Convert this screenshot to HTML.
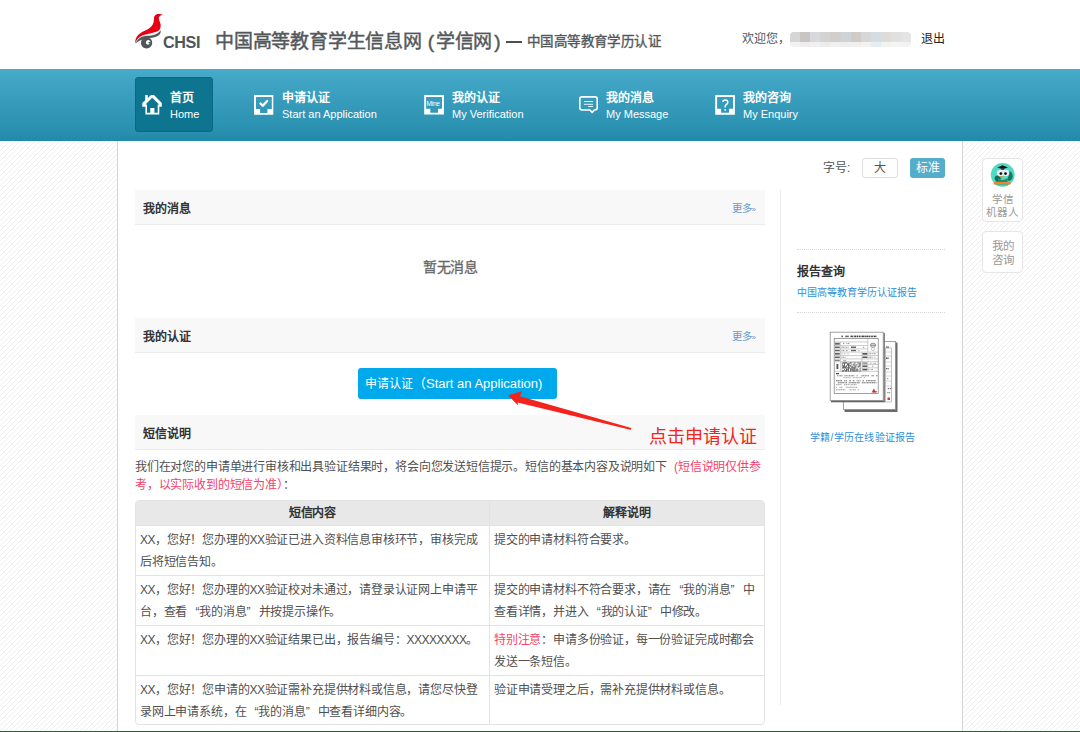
<!DOCTYPE html>
<html lang="zh-CN"><head><meta charset="utf-8">
<style>
*{margin:0;padding:0;box-sizing:border-box}
html,body{width:1080px;height:732px;overflow:hidden;background:#fff;font-family:"Liberation Sans",sans-serif;font-size:12px;color:#333}
.a{position:absolute;white-space:nowrap}
.nav{position:absolute;left:0;top:69px;width:1080px;height:72px;background:linear-gradient(#46aac9,#2a90b0 85%,#2389a8)}
.ni .cn{position:absolute;font-size:12px;font-weight:bold;color:#fff;line-height:12px;margin-top:1px}
.ni .en{position:absolute;font-size:11px;color:#fff;line-height:12px}
.bar{position:absolute;left:135px;width:630px;height:35px;background:#f8f8f8;border-bottom:1px solid #ececec}
.bar b{position:absolute;left:8px;top:11.5px;font-size:12px;line-height:14px;color:#333}
.more{position:absolute;right:9px;top:10.5px;font-size:10.5px;line-height:14px;color:#6a9bd6}
.more i{font-style:normal;font-size:8px}
table{position:absolute;left:135px;top:500px;width:630px;border-collapse:separate;border-spacing:0;border:1px solid #e3e3e3;border-radius:4px;overflow:hidden}
td,th{font-size:12px;letter-spacing:-0.18px;color:#505050;line-height:21.5px;vertical-align:top;padding:4px 4px 1px 4px;border-top:1px solid #e3e3e3;text-align:left;white-space:nowrap}
th{background:#e8e8e8;border-top:none;text-align:center;font-weight:bold;color:#333;height:24px;line-height:20px;padding:2px 4px}
td+td,th+th{border-left:1px solid #e3e3e3}
.red{color:#f4426a}
i.ql,i.qr{font-style:normal;display:inline-block;width:12px}
i.ql{text-align:right}
.x{letter-spacing:-0.5px}
</style></head><body>
<!-- striped background -->
<svg class="a" style="left:0;top:141px" width="1080" height="591">
<defs><pattern id="st" width="5" height="5" patternUnits="userSpaceOnUse"><path d="M-1,6 L6,-1" stroke="#efefef" stroke-width="1"/></pattern></defs>
<rect width="1080" height="591" fill="#fff"/><rect width="1080" height="591" fill="url(#st)"/>
</svg>
<div class="a" style="left:117px;top:141px;width:846px;height:591px;background:#fff;border-left:1px solid #d5d5d5;border-right:1px solid #d5d5d5"></div>
<div class="a" style="left:0;top:731px;width:1080px;height:1px;background:#2d5e34"></div>

<!-- header -->
<svg class="a" style="left:125px;top:5px" width="85" height="50" viewBox="125 5 85 50">
<path d="M162.8,14.6 C160.5,13.8 158,13.9 156.2,14.4 C154.6,15.3 154,16.8 154,18.2 C153.9,20 153.8,21.5 153.5,22.6 C152.8,25 151.6,26.5 150.2,27.5 C148,29.2 145.8,30.3 143.7,31.3 C141.5,32.4 139.6,33.6 138.2,35.1 C136.6,36.7 135.8,38.3 135.5,40 C135.2,41.2 135.1,42.4 135.2,43.3 C135.8,41.8 136.4,40.5 137.1,39.5 C139,37.3 141.2,35.9 143.7,35.1 C146.5,34.2 149.3,33.7 151.9,33 C154.5,32.4 156.7,31.8 158.4,30.8 C159.5,30 160.1,29 160.3,28 C160.8,26.7 160.8,25.4 160.6,24.2 C160.3,22.6 159.5,21.2 159,19.8 C158.7,18.5 158.9,17.3 159.5,16.6 C160.4,15.6 161.6,15 162.8,14.6 Z" fill="#e60012"/>
<path d="M135.4,43.6 C136.8,40.8 138.6,38.6 140.9,37.3 C143.6,35.9 146.4,35.8 149.1,35.7 C151.7,35.5 154.1,35.2 156.2,34 C158.3,33 159.8,31.7 160.6,30.2 C160.9,31.8 160.6,33.3 159.5,34.6 C158.1,36.1 156.4,36.9 154.6,37.3 C151.8,37.9 149,38 146.4,38.4 C143.8,38.8 141.6,39.5 139.8,40.6 C138.1,41.6 136.6,42.6 135.4,43.6 Z" fill="#50575a"/>
<path d="M146.6,37.3 C149.8,37.3 152.2,39.6 152.2,42.8 C152.2,46 149.8,48.4 146.6,48.4 C143.4,48.4 141,46 141,42.8 C141,40.6 142,38.9 143.5,38 C144.5,37.5 145.5,37.3 146.6,37.3 Z M148.4,39.9 C146.9,39.9 145.9,41 145.9,42.4 C145.9,43.7 146.9,44.6 148.1,44.6 C149,44.6 149.6,44.1 149.9,43.4 C149.4,43.7 148.9,43.6 148.6,43.2 C148.3,42.7 148.5,42.1 149,41.9 C149.5,41.7 150.2,42 150.5,42.5 C150.4,41 149.6,39.9 148.4,39.9 Z" fill="#50575a" fill-rule="evenodd"/>
<text x="163" y="48.3" font-family="Liberation Sans" font-weight="bold" font-size="16.2" letter-spacing="-0.4" fill="#50575a">CHSI</text>
</svg>
<div class="a" style="left:215px;top:30px;font-size:19px;line-height:24px;font-weight:normal;-webkit-text-stroke:0.45px #53585b;color:#53585b;letter-spacing:-0.2px">中国高等教育学生信息网<span style="display:inline-block;width:14px;font-family:'Liberation Sans';font-weight:normal;text-align:right;padding-right:2px">(</span>学信网<span style="display:inline-block;width:14px;font-family:'Liberation Sans';font-weight:normal;padding-left:2px">)</span></div>
<div class="a" style="left:506px;top:41px;width:16px;height:2px;background:#4a4f52"></div>
<div class="a" style="left:527px;top:33px;font-size:13.5px;letter-spacing:0.4px;line-height:18px;font-weight:normal;-webkit-text-stroke:0.35px #53585b;color:#53585b">中国高等教育学历认证</div>
<div class="a" style="left:742px;top:31px;font-size:12px;line-height:16px;color:#555">欢迎您，</div>
<div class="a" style="left:790px;top:32px;width:121px;height:15px;border-radius:4px;overflow:hidden;filter:blur(0.5px)"><div style="position:absolute;left:0.00px;top:0;width:10.2px;height:10px;background:#d6d5d7"></div><div style="position:absolute;left:0.00px;top:10px;width:10.2px;height:5px;background:#f2f2f2"></div><div style="position:absolute;left:10.12px;top:0;width:10.2px;height:10px;background:#c8c5c2"></div><div style="position:absolute;left:10.12px;top:10px;width:10.2px;height:5px;background:#eeeeee"></div><div style="position:absolute;left:20.24px;top:0;width:10.2px;height:10px;background:#d8d9dd"></div><div style="position:absolute;left:20.24px;top:10px;width:10.2px;height:5px;background:#f0f0f0"></div><div style="position:absolute;left:30.36px;top:0;width:10.2px;height:10px;background:#d3d3d3"></div><div style="position:absolute;left:30.36px;top:10px;width:10.2px;height:5px;background:#ececec"></div><div style="position:absolute;left:40.48px;top:0;width:10.2px;height:10px;background:#d2cecb"></div><div style="position:absolute;left:40.48px;top:10px;width:10.2px;height:5px;background:#f0f0f0"></div><div style="position:absolute;left:50.60px;top:0;width:10.2px;height:10px;background:#cfd3d6"></div><div style="position:absolute;left:50.60px;top:10px;width:10.2px;height:5px;background:#eeeeee"></div><div style="position:absolute;left:60.72px;top:0;width:10.2px;height:10px;background:#cecbc9"></div><div style="position:absolute;left:60.72px;top:10px;width:10.2px;height:5px;background:#efefef"></div><div style="position:absolute;left:70.84px;top:0;width:10.2px;height:10px;background:#d7d7d7"></div><div style="position:absolute;left:70.84px;top:10px;width:10.2px;height:5px;background:#f4f2ee"></div><div style="position:absolute;left:80.96px;top:0;width:10.2px;height:10px;background:#d4dde3"></div><div style="position:absolute;left:80.96px;top:10px;width:10.2px;height:5px;background:#e6edf2"></div><div style="position:absolute;left:91.08px;top:0;width:10.2px;height:10px;background:#dfdcd7"></div><div style="position:absolute;left:91.08px;top:10px;width:10.2px;height:5px;background:#f2f2ee"></div><div style="position:absolute;left:101.20px;top:0;width:10.2px;height:10px;background:#e0e0e0"></div><div style="position:absolute;left:101.20px;top:10px;width:10.2px;height:5px;background:#f4f4f4"></div><div style="position:absolute;left:111.32px;top:0;width:10.2px;height:10px;background:#e4e4e4"></div><div style="position:absolute;left:111.32px;top:10px;width:10.2px;height:5px;background:#f2f2f2"></div></div>
<div class="a" style="left:921px;top:31px;font-size:12px;line-height:16px;color:#222">退出</div>

<!-- nav -->
<div class="nav"></div>
<div class="a" style="left:135px;top:77px;width:78px;height:55px;background:#0e7591;border:1px solid #0b6883;border-radius:3px"></div>
<div class="ni">
 <svg class="a" style="left:138px;top:90px" width="30" height="30" viewBox="138 90 30 30"><path d="M145.2,95.1 H147.8 V98 L151.1,95.1 H154 L161.8,102.9 V106.8 H159.3 V114.6 H145.4 V106.8 H142.3 V103.1 L145.2,100.2 Z M145.5,104.6 L147,104.6 V112.8 H150.3 V108 H154.4 V112.8 H157.7 V104.4 H159.1 L152.2,97.8 Z" fill="#fff" fill-rule="evenodd"/></svg>
 <div class="cn" style="left:170px;top:91px">首页</div><div class="en" style="left:170px;top:108px">Home</div>
 <svg class="a" style="left:250px;top:90px" width="28" height="28" viewBox="250 90 28 28"><path d="M254,95 H273.3 V114.7 H254 Z M255.9,97.1 V108.9 H260.1 V113 H267.4 V108.9 H271.8 V97.1 Z" fill="#fff" fill-rule="evenodd"/><path d="M260.5,103.5 L262.8,105.8 L267.2,101" fill="none" stroke="#fff" stroke-width="2.3" stroke-linecap="round" stroke-linejoin="round"/></svg>
 <div class="cn" style="left:282px;top:91px">申请认证</div><div class="en" style="left:282px;top:108px">Start an Application</div>
 <svg class="a" style="left:420px;top:90px" width="28" height="28" viewBox="420 90 28 28"><path d="M424.2,95 H443.9 V114.6 H424.2 Z M426.1,97.1 V108.7 H430.3 V112.8 H438 V108.7 H442 V97.1 Z" fill="#fff" fill-rule="evenodd"/><text x="426.6" y="106" font-family="Liberation Sans" font-size="6.6" letter-spacing="-0.3" fill="#fff">Mine</text></svg>
 <div class="cn" style="left:452px;top:91px">我的认证</div><div class="en" style="left:452px;top:108px">My Verification</div>
 <svg class="a" style="left:575px;top:90px" width="28" height="28" viewBox="575 90 28 28"><path d="M582,96.9 H595 Q597.2,96.9 597.2,99.1 V107.8 Q597.2,110 595,110 H594.3 L592.2,112.4 L589.9,110 H582 Q579.8,110 579.8,107.8 V99.1 Q579.8,96.9 582,96.9 Z" fill="none" stroke="#fff" stroke-width="1.6" stroke-linejoin="round"/><path d="M584,101.5 H593 M584,104.3 H593 M588.2,106.5 H593" stroke="#fff" stroke-width="0.9"/></svg>
 <div class="cn" style="left:606px;top:91px">我的消息</div><div class="en" style="left:606px;top:108px">My Message</div>
 <svg class="a" style="left:711px;top:90px" width="28" height="28" viewBox="711 90 28 28"><path d="M715.2,95 H734.9 V114.7 H715.2 Z M717.1,97.1 V108.7 H721.1 V112.8 H729 V108.7 H733 V97.1 Z" fill="#fff" fill-rule="evenodd"/><path d="M722.9,102 Q722.9,100 725.3,100 Q727.8,100 727.8,102.2 Q727.8,103.6 726.3,104.5 Q725.2,105.2 725.2,106.8 V107.5" fill="none" stroke="#fff" stroke-width="1.5"/><rect x="724.4" y="109.2" width="1.6" height="1.5" fill="#fff"/></svg>
 <div class="cn" style="left:743px;top:91px">我的咨询</div><div class="en" style="left:743px;top:108px">My Enquiry</div>
</div>

<!-- font size -->
<div class="a" style="left:823px;top:161px;font-size:12px;line-height:14px;color:#555">字号:</div>
<div class="a" style="left:862px;top:158px;width:36px;height:20px;border:1px solid #dcdcdc;border-radius:3px;font-size:12px;line-height:18px;text-align:center;color:#555">大</div>
<div class="a" style="left:910px;top:158px;width:35px;height:20px;background:#56adca;border-radius:3px;font-size:12px;line-height:20px;text-align:center;color:#fff">标准</div>

<!-- float -->
<div class="a" style="left:982px;top:158px;width:41px;height:64px;border:1px solid #e6e6e6;border-radius:4px;background:#fff"></div>
<svg class="a" style="left:988px;top:160px" width="30" height="30" viewBox="988 160 30 30">
<circle cx="1002.7" cy="174.8" r="11.9" fill="#50dac4"/>
<path d="M994.5,178.5 Q995,175 998,175.5 L1001,178 L999,182 L996,181.5 Z" fill="#0f6e58"/>
<path d="M1007,180 Q1009,176 1009.5,171 Q1012.5,172 1012.8,176.5 Q1012.5,180 1009,181 Z" fill="#127a60"/>
<path d="M998,178 Q1002.5,182 1007.5,178 L1007.5,182 L998,182 Z" fill="#1f8f74"/>
<ellipse cx="1000.5" cy="173" rx="3.6" ry="3.2" fill="#e8eef4"/>
<ellipse cx="1005.6" cy="173" rx="3.6" ry="3.2" fill="#e8eef4"/>
<circle cx="1000.9" cy="173.6" r="1.4" fill="#111"/><circle cx="1005.5" cy="173.6" r="1.4" fill="#111"/>
<path d="M997.3,167.6 L1002.6,165.3 L1007.9,167.6 L1002.6,169.3 Z" fill="#151515"/>
<rect x="1001.3" y="168.6" width="2.6" height="1.4" fill="#0f6e58"/>
<path d="M1000,176 L1002.6,176 L1002,179.5 Z" fill="#f28a2c"/>
<rect x="993.5" y="182" width="17" height="2.4" rx="0.6" fill="#f0842c"/>
<path d="M991.8,183.2 L993.6,182 L993.6,184.4 Z" fill="#f4e6d8"/>
<rect x="996" y="184.4" width="12" height="0.8" fill="#2fb384"/>
</svg>
<div class="a" style="left:982px;top:193px;width:41px;text-align:center;font-size:10.6px;line-height:13.2px;color:#999">学信<br>机器人</div>
<div class="a" style="left:982px;top:231px;width:41px;height:42px;border:1px solid #e6e6e6;border-radius:4px;background:#fff;text-align:center;font-size:11.5px;line-height:13.5px;color:#999;padding-top:8px">我的<br>咨询</div>

<!-- left column -->
<div class="bar" style="top:190px"><b>我的消息</b><span class="more">更多<i>»</i></span></div>
<div class="a" style="left:423px;top:257px;font-size:14px;letter-spacing:-0.3px;-webkit-text-stroke:0.3px #666;line-height:20px;color:#666">暂无消息</div>
<div class="bar" style="top:318px"><b>我的认证</b><span class="more">更多<i>»</i></span></div>
<div class="a" style="left:358px;top:368px;width:199px;height:31px;background:#00a9ec;border-radius:3px"></div>
<div class="a" style="left:365px;top:376px;font-size:12px;line-height:16px;color:#fff">申请认证<span style="font-size:13px">（Start an Application)</span></div>
<div class="bar" style="top:415px"><b>短信说明</b></div>
<svg class="a" style="left:500px;top:385px" width="140" height="50" viewBox="500 385 140 50">
<path d="M508,395.3 L522,391.2 L520,396.2 L631.2,427.9 Q632,429.4 630.4,429.8 L517.6,402.6 L518.2,405.6 Z" fill="#f4241c"/>
</svg>
<div class="a" style="left:649px;top:425px;font-size:18px;line-height:24px;color:#f4241c">点击申请认证</div>
<div class="a" style="left:135px;top:459px;font-size:12px;letter-spacing:-0.18px;line-height:17.5px;color:#505050">我们在对您的申请单进行审核和出具验证结果时，将会向您发送短信提示。短信的基本内容及说明如下<span class="red"><i class="ql" style="width:11px">(</i>短信说明仅供参<br>考，以实际收到的短信为准）</span>：</div>

<table>
<tr><th style="width:353px">短信内容</th><th>解释说明</th></tr>
<tr style="height:50px"><td><span class="x">XX</span>，您好！您办理的<span class="x">XX</span>验证已进入资料信息审核环节，审核完成<br>后将短信告知。</td><td>提交的申请材料符合要求。</td></tr>
<tr style="height:50px"><td><span class="x">XX</span>，您好！您办理的<span class="x">XX</span>验证校对未通过，请登录认证网上申请平<br>台，查看<i class="ql">“</i>我的消息<i class="qr">”</i>并按提示操作。</td><td>提交的申请材料不符合要求，请在<i class="ql">“</i>我的消息<i class="qr">”</i>中<br>查看详情，并进入<i class="ql">“</i>我的认证<i class="qr">”</i>中修改。</td></tr>
<tr style="height:50px"><td><span class="x">XX</span>，您好！您办理的<span class="x">XX</span>验证结果已出，报告编号：<span class="x">XXXXXXXX</span>。</td><td><span class="red">特别注意</span>：申请多份验证，每一份验证完成时都会<br>发送一条短信。</td></tr>
<tr style="height:47px"><td><span class="x">XX</span>，您好！您申请的<span class="x">XX</span>验证需补充提供材料或信息，请您尽快登<br>录网上申请系统，在<i class="ql">“</i>我的消息<i class="qr">”</i>中查看详细内容。</td><td>验证申请受理之后，需补充提供材料或信息。</td></tr>
</table>

<!-- right column -->
<div class="a" style="left:779.5px;top:190px;width:1.5px;height:515px;background:#ececec"></div>
<div class="a" style="left:797px;top:249px;width:148px;border-top:1px dotted #d6d6d6"></div>
<div class="a" style="left:797px;top:264.5px;font-size:12px;line-height:14px;font-weight:bold;color:#333">报告查询</div>
<div class="a" style="left:797px;top:286px;font-size:10px;line-height:14px;color:#2e8fd6">中国高等教育学历认证报告</div>
<div class="a" style="left:797px;top:312px;width:148px;border-top:1px dotted #d6d6d6"></div>
<svg class="a" style="left:826px;top:328px" width="76" height="88" viewBox="826 328 76 88">
<rect x="844.5" y="342.5" width="53.0" height="69.5" fill="#6a6a6a"/>
<rect x="843.5" y="341.5" width="52.0" height="68.0" fill="#fff"/>
<rect x="843.5" y="341.5" width="52" height="68" fill="none" stroke="#8a8a8a" stroke-width="0.8"/>
<rect x="885.5" y="348" width="6" height="54" fill="none" stroke="#999" stroke-width="0.6"/>
<rect x="886.0" y="346.5" width="3.0" height="1.2" fill="#666"/>
<path d="M885.5,352.0 L891.5,352.0" stroke="#aaa" stroke-width="0.5"/>
<path d="M885.5,356.0 L891.5,356.0" stroke="#aaa" stroke-width="0.5"/>
<path d="M885.5,362.0 L891.5,362.0" stroke="#aaa" stroke-width="0.5"/>
<path d="M885.5,366.0 L891.5,366.0" stroke="#aaa" stroke-width="0.5"/>
<path d="M885.5,372.0 L891.5,372.0" stroke="#aaa" stroke-width="0.5"/>
<path d="M885.5,376.0 L891.5,376.0" stroke="#aaa" stroke-width="0.5"/>
<path d="M885.5,381.0 L891.5,381.0" stroke="#aaa" stroke-width="0.5"/>
<path d="M885.5,386.0 L891.5,386.0" stroke="#aaa" stroke-width="0.5"/>
<rect x="886.0" y="357.5" width="1.0" height="1.5" fill="#555"/>
<rect x="887.3" y="357.5" width="1.3" height="1.5" fill="#555"/>
<rect x="886.0" y="368.0" width="1.5" height="1.2" fill="#666"/>
<rect x="887.9" y="368.0" width="0.9" height="1.2" fill="#666"/>
<rect x="887.3" y="378.0" width="1.0" height="1.2" fill="#777"/>
<rect x="887.7" y="388.0" width="1.4" height="1.2" fill="#777"/>
<rect x="889.7" y="388.0" width="1.5" height="1.2" fill="#777"/>
<rect x="887.3" y="392.0" width="1.3" height="1.2" fill="#888"/>
<rect x="889.1" y="392.0" width="1.1" height="1.2" fill="#888"/>
<rect x="887.5" y="397.5" width="2.5" height="2.5" fill="#d9363e"/>
<rect x="831.0" y="333.0" width="53.8" height="69.3" fill="#666"/>
<rect x="830.0" y="332.0" width="53.5" height="68.5" fill="#fff"/>
<rect x="830.2" y="332.2" width="53" height="68.3" fill="none" stroke="#8a8a8a" stroke-width="0.8"/>
<rect x="841.5" y="335.6" width="1.3" height="1.6" fill="#333"/>
<rect x="845.4" y="335.6" width="1.4" height="1.6" fill="#333"/>
<rect x="847.3" y="335.6" width="1.3" height="1.6" fill="#333"/>
<rect x="850.5" y="335.6" width="1.4" height="1.6" fill="#333"/>
<rect x="852.2" y="335.6" width="1.0" height="1.6" fill="#333"/>
<rect x="853.8" y="335.6" width="0.8" height="1.6" fill="#333"/>
<rect x="854.8" y="335.6" width="1.4" height="1.6" fill="#333"/>
<rect x="856.7" y="335.6" width="1.6" height="1.6" fill="#333"/>
<rect x="858.9" y="335.6" width="1.0" height="1.6" fill="#333"/>
<rect x="860.4" y="335.6" width="0.8" height="1.6" fill="#333"/>
<rect x="861.6" y="335.6" width="1.3" height="1.6" fill="#333"/>
<rect x="863.1" y="335.6" width="1.5" height="1.6" fill="#333"/>
<rect x="865.2" y="335.6" width="1.5" height="1.6" fill="#333"/>
<rect x="867.1" y="335.6" width="1.2" height="1.6" fill="#333"/>
<rect x="868.7" y="335.6" width="1.2" height="1.6" fill="#333"/>
<rect x="870.6" y="335.6" width="1.2" height="1.6" fill="#333"/>
<rect x="872.2" y="335.6" width="1.0" height="1.6" fill="#333"/>
<rect x="873.8" y="335.6" width="1.2" height="1.6" fill="#333"/>
<rect x="875.3" y="335.6" width="1.1" height="1.6" fill="#333"/>
<rect x="834.2" y="338.5" width="44" height="55" fill="none" stroke="#777" stroke-width="0.7"/>
<path d="M834.2,341.9 L867.8,341.9" stroke="#999" stroke-width="0.5"/>
<path d="M834.2,345.6 L867.8,345.6" stroke="#999" stroke-width="0.5"/>
<path d="M834.2,348.9 L867.8,348.9" stroke="#999" stroke-width="0.5"/>
<path d="M834.2,352.1 L878.2,352.1" stroke="#999" stroke-width="0.5"/>
<path d="M834.2,355.6 L878.2,355.6" stroke="#999" stroke-width="0.5"/>
<path d="M834.2,358.9 L878.2,358.9" stroke="#999" stroke-width="0.5"/>
<path d="M834.2,361.7 L878.2,361.7" stroke="#999" stroke-width="0.5"/>
<path d="M834.2,371.3 L878.2,371.3" stroke="#999" stroke-width="0.5"/>
<path d="M867.8,338.5 L867.8,352.1" stroke="#999" stroke-width="0.5"/>
<path d="M862.0,352.1 L862.0,371.3" stroke="#999" stroke-width="0.5"/>
<path d="M840.5,341.9 L840.5,361.7" stroke="#aaa" stroke-width="0.5"/>
<rect x="835.0" y="342.8" width="4.8" height="1.9" fill="#666"/>
<rect x="843.0" y="343.0" width="1.3" height="1.1" fill="#999"/>
<rect x="846.4" y="343.0" width="0.8" height="1.1" fill="#999"/>
<rect x="847.7" y="343.0" width="1.6" height="1.1" fill="#999"/>
<rect x="835.0" y="346.5" width="4.8" height="1.5" fill="#666"/>
<rect x="841.5" y="346.7" width="1.3" height="1.1" fill="#999"/>
<rect x="843.1" y="346.7" width="1.1" height="1.1" fill="#999"/>
<rect x="844.6" y="346.7" width="1.0" height="1.1" fill="#999"/>
<rect x="846.2" y="346.7" width="0.8" height="1.1" fill="#999"/>
<rect x="847.5" y="346.7" width="1.0" height="1.1" fill="#999"/>
<rect x="835.0" y="349.8" width="4.8" height="1.4" fill="#666"/>
<rect x="841.5" y="350.0" width="1.0" height="1.1" fill="#999"/>
<rect x="842.9" y="350.0" width="1.4" height="1.1" fill="#999"/>
<rect x="846.0" y="350.0" width="1.5" height="1.1" fill="#999"/>
<rect x="835.0" y="353.0" width="4.8" height="1.7" fill="#666"/>
<rect x="841.5" y="353.2" width="1.0" height="1.1" fill="#999"/>
<rect x="844.4" y="353.2" width="0.9" height="1.1" fill="#999"/>
<rect x="847.5" y="353.2" width="0.9" height="1.1" fill="#999"/>
<rect x="835.0" y="356.5" width="4.8" height="1.5" fill="#666"/>
<rect x="841.5" y="356.7" width="1.0" height="1.1" fill="#999"/>
<rect x="842.9" y="356.7" width="1.1" height="1.1" fill="#999"/>
<rect x="844.6" y="356.7" width="0.9" height="1.1" fill="#999"/>
<rect x="835.0" y="359.8" width="4.8" height="1.0" fill="#666"/>
<rect x="843.4" y="360.0" width="1.2" height="1.1" fill="#999"/>
<rect x="844.9" y="360.0" width="1.0" height="1.1" fill="#999"/>
<rect x="851.0" y="346.5" width="5.0" height="1.5" fill="#666"/>
<rect x="863.1" y="346.7" width="1.1" height="1.1" fill="#999"/>
<rect x="851.0" y="349.8" width="5.0" height="1.4" fill="#666"/>
<rect x="858.5" y="350.0" width="1.0" height="1.1" fill="#999"/>
<rect x="862.5" y="353.0" width="5.0" height="1.7" fill="#555"/>
<rect x="868.5" y="353.2" width="1.0" height="1.1" fill="#999"/>
<rect x="869.9" y="353.2" width="1.1" height="1.1" fill="#999"/>
<rect x="871.6" y="353.2" width="0.8" height="1.1" fill="#999"/>
<rect x="872.6" y="353.2" width="0.9" height="1.1" fill="#999"/>
<rect x="874.1" y="353.2" width="1.5" height="1.1" fill="#999"/>
<rect x="862.5" y="356.5" width="5.0" height="1.5" fill="#555"/>
<rect x="868.5" y="356.7" width="1.1" height="1.1" fill="#999"/>
<rect x="869.9" y="356.7" width="1.3" height="1.1" fill="#999"/>
<rect x="871.6" y="356.7" width="1.0" height="1.1" fill="#999"/>
<rect x="874.4" y="356.7" width="0.9" height="1.1" fill="#999"/>
<rect x="862.5" y="362.6" width="5.0" height="1.0" fill="#555"/>
<rect x="870.3" y="362.8" width="1.1" height="1.1" fill="#999"/>
<rect x="873.4" y="362.8" width="1.0" height="1.1" fill="#999"/>
<rect x="874.9" y="362.8" width="0.9" height="1.1" fill="#999"/>
<rect x="862.5" y="365.4" width="5.0" height="1.5" fill="#555"/>
<rect x="872.2" y="365.6" width="1.2" height="1.1" fill="#999"/>
<rect x="862.5" y="368.7" width="5.0" height="1.7" fill="#555"/>
<rect x="868.5" y="368.9" width="0.9" height="1.1" fill="#999"/>
<rect x="870.7" y="368.9" width="0.9" height="1.1" fill="#999"/>
<rect x="872.1" y="368.9" width="0.9" height="1.1" fill="#999"/>
<path d="M862.0,364.5 L878.2,364.5" stroke="#999" stroke-width="0.5"/>
<path d="M862.0,367.8 L878.2,367.8" stroke="#999" stroke-width="0.5"/>
<path d="M868.0,352.1 L868.0,371.3" stroke="#bbb" stroke-width="0.4"/>
<ellipse cx="873" cy="345.2" rx="2.6" ry="2" fill="none" stroke="#777" stroke-width="0.8"/>
<rect x="870.5" y="344.6" width="5.0" height="1.2" fill="#888"/>
<ellipse cx="873" cy="349" rx="1.6" ry="1.6" fill="none" stroke="#999" stroke-width="0.5"/>
<rect x="836.5" y="364.0" width="1.8" height="5.0" fill="#555"/>
<path d="M840.5,361.7 L840.5,371.3" stroke="#aaa" stroke-width="0.5"/>
<rect x="842.0" y="363.4" width="1.0" height="1.0" fill="#3a3a3a"/>
<rect x="842.0" y="365.4" width="1.0" height="1.0" fill="#3a3a3a"/>
<rect x="842.0" y="367.4" width="1.0" height="1.0" fill="#3a3a3a"/>
<rect x="842.0" y="370.4" width="1.0" height="1.0" fill="#3a3a3a"/>
<rect x="843.0" y="362.4" width="1.0" height="1.0" fill="#3a3a3a"/>
<rect x="843.0" y="365.4" width="1.0" height="1.0" fill="#3a3a3a"/>
<rect x="843.0" y="366.4" width="1.0" height="1.0" fill="#3a3a3a"/>
<rect x="843.0" y="367.4" width="1.0" height="1.0" fill="#3a3a3a"/>
<rect x="843.0" y="370.4" width="1.0" height="1.0" fill="#3a3a3a"/>
<rect x="844.0" y="362.4" width="1.0" height="1.0" fill="#3a3a3a"/>
<rect x="844.0" y="363.4" width="1.0" height="1.0" fill="#3a3a3a"/>
<rect x="844.0" y="364.4" width="1.0" height="1.0" fill="#3a3a3a"/>
<rect x="844.0" y="365.4" width="1.0" height="1.0" fill="#3a3a3a"/>
<rect x="844.0" y="366.4" width="1.0" height="1.0" fill="#3a3a3a"/>
<rect x="844.0" y="367.4" width="1.0" height="1.0" fill="#3a3a3a"/>
<rect x="844.0" y="369.4" width="1.0" height="1.0" fill="#3a3a3a"/>
<rect x="845.0" y="362.4" width="1.0" height="1.0" fill="#3a3a3a"/>
<rect x="845.0" y="366.4" width="1.0" height="1.0" fill="#3a3a3a"/>
<rect x="845.0" y="367.4" width="1.0" height="1.0" fill="#3a3a3a"/>
<rect x="845.0" y="370.4" width="1.0" height="1.0" fill="#3a3a3a"/>
<rect x="846.0" y="362.4" width="1.0" height="1.0" fill="#3a3a3a"/>
<rect x="846.0" y="365.4" width="1.0" height="1.0" fill="#3a3a3a"/>
<rect x="846.0" y="366.4" width="1.0" height="1.0" fill="#3a3a3a"/>
<rect x="846.0" y="368.4" width="1.0" height="1.0" fill="#3a3a3a"/>
<rect x="846.0" y="369.4" width="1.0" height="1.0" fill="#3a3a3a"/>
<rect x="846.0" y="370.4" width="1.0" height="1.0" fill="#3a3a3a"/>
<rect x="847.0" y="363.4" width="1.0" height="1.0" fill="#3a3a3a"/>
<rect x="847.0" y="364.4" width="1.0" height="1.0" fill="#3a3a3a"/>
<rect x="847.0" y="367.4" width="1.0" height="1.0" fill="#3a3a3a"/>
<rect x="847.0" y="369.4" width="1.0" height="1.0" fill="#3a3a3a"/>
<rect x="848.0" y="363.4" width="1.0" height="1.0" fill="#3a3a3a"/>
<rect x="848.0" y="364.4" width="1.0" height="1.0" fill="#3a3a3a"/>
<rect x="848.0" y="365.4" width="1.0" height="1.0" fill="#3a3a3a"/>
<rect x="848.0" y="366.4" width="1.0" height="1.0" fill="#3a3a3a"/>
<rect x="848.0" y="367.4" width="1.0" height="1.0" fill="#3a3a3a"/>
<rect x="848.0" y="368.4" width="1.0" height="1.0" fill="#3a3a3a"/>
<rect x="848.0" y="369.4" width="1.0" height="1.0" fill="#3a3a3a"/>
<rect x="848.0" y="370.4" width="1.0" height="1.0" fill="#3a3a3a"/>
<rect x="849.0" y="363.4" width="1.0" height="1.0" fill="#3a3a3a"/>
<rect x="849.0" y="365.4" width="1.0" height="1.0" fill="#3a3a3a"/>
<rect x="849.0" y="367.4" width="1.0" height="1.0" fill="#3a3a3a"/>
<rect x="850.0" y="362.4" width="1.0" height="1.0" fill="#3a3a3a"/>
<rect x="850.0" y="365.4" width="1.0" height="1.0" fill="#3a3a3a"/>
<rect x="850.0" y="368.4" width="1.0" height="1.0" fill="#3a3a3a"/>
<rect x="850.0" y="369.4" width="1.0" height="1.0" fill="#3a3a3a"/>
<rect x="850.0" y="370.4" width="1.0" height="1.0" fill="#3a3a3a"/>
<rect x="842" y="362.4" width="9" height="9" fill="none" stroke="#666" stroke-width="0.3"/>
<rect x="851.5" y="366.4" width="1.0" height="1.0" fill="#3a3a3a"/>
<rect x="851.5" y="367.4" width="1.0" height="1.0" fill="#3a3a3a"/>
<rect x="851.5" y="368.4" width="1.0" height="1.0" fill="#3a3a3a"/>
<rect x="851.5" y="369.4" width="1.0" height="1.0" fill="#3a3a3a"/>
<rect x="852.5" y="364.4" width="1.0" height="1.0" fill="#3a3a3a"/>
<rect x="852.5" y="366.4" width="1.0" height="1.0" fill="#3a3a3a"/>
<rect x="852.5" y="367.4" width="1.0" height="1.0" fill="#3a3a3a"/>
<rect x="852.5" y="369.4" width="1.0" height="1.0" fill="#3a3a3a"/>
<rect x="852.5" y="370.4" width="1.0" height="1.0" fill="#3a3a3a"/>
<rect x="853.5" y="363.4" width="1.0" height="1.0" fill="#3a3a3a"/>
<rect x="853.5" y="364.4" width="1.0" height="1.0" fill="#3a3a3a"/>
<rect x="853.5" y="367.4" width="1.0" height="1.0" fill="#3a3a3a"/>
<rect x="853.5" y="368.4" width="1.0" height="1.0" fill="#3a3a3a"/>
<rect x="853.5" y="369.4" width="1.0" height="1.0" fill="#3a3a3a"/>
<rect x="853.5" y="370.4" width="1.0" height="1.0" fill="#3a3a3a"/>
<rect x="854.5" y="362.4" width="1.0" height="1.0" fill="#3a3a3a"/>
<rect x="854.5" y="365.4" width="1.0" height="1.0" fill="#3a3a3a"/>
<rect x="854.5" y="366.4" width="1.0" height="1.0" fill="#3a3a3a"/>
<rect x="854.5" y="367.4" width="1.0" height="1.0" fill="#3a3a3a"/>
<rect x="854.5" y="368.4" width="1.0" height="1.0" fill="#3a3a3a"/>
<rect x="854.5" y="370.4" width="1.0" height="1.0" fill="#3a3a3a"/>
<rect x="855.5" y="364.4" width="1.0" height="1.0" fill="#3a3a3a"/>
<rect x="855.5" y="366.4" width="1.0" height="1.0" fill="#3a3a3a"/>
<rect x="855.5" y="369.4" width="1.0" height="1.0" fill="#3a3a3a"/>
<rect x="856.5" y="364.4" width="1.0" height="1.0" fill="#3a3a3a"/>
<rect x="856.5" y="368.4" width="1.0" height="1.0" fill="#3a3a3a"/>
<rect x="856.5" y="369.4" width="1.0" height="1.0" fill="#3a3a3a"/>
<rect x="856.5" y="370.4" width="1.0" height="1.0" fill="#3a3a3a"/>
<rect x="857.5" y="362.4" width="1.0" height="1.0" fill="#3a3a3a"/>
<rect x="857.5" y="366.4" width="1.0" height="1.0" fill="#3a3a3a"/>
<rect x="857.5" y="369.4" width="1.0" height="1.0" fill="#3a3a3a"/>
<rect x="858.5" y="363.4" width="1.0" height="1.0" fill="#3a3a3a"/>
<rect x="858.5" y="365.4" width="1.0" height="1.0" fill="#3a3a3a"/>
<rect x="858.5" y="366.4" width="1.0" height="1.0" fill="#3a3a3a"/>
<rect x="859.5" y="362.4" width="1.0" height="1.0" fill="#3a3a3a"/>
<rect x="859.5" y="363.4" width="1.0" height="1.0" fill="#3a3a3a"/>
<rect x="859.5" y="364.4" width="1.0" height="1.0" fill="#3a3a3a"/>
<rect x="859.5" y="365.4" width="1.0" height="1.0" fill="#3a3a3a"/>
<rect x="859.5" y="368.4" width="1.0" height="1.0" fill="#3a3a3a"/>
<rect x="859.5" y="370.4" width="1.0" height="1.0" fill="#3a3a3a"/>
<rect x="851.5" y="362.4" width="9" height="9" fill="none" stroke="#666" stroke-width="0.3"/>
<rect x="836.0" y="373.0" width="3.0" height="1.2" fill="#444"/>
<rect x="837.0" y="375.2" width="1.0" height="1.1" fill="#888"/>
<rect x="838.6" y="375.2" width="0.8" height="1.1" fill="#888"/>
<rect x="839.7" y="375.2" width="1.4" height="1.1" fill="#888"/>
<rect x="841.4" y="375.2" width="1.1" height="1.1" fill="#888"/>
<rect x="844.4" y="375.2" width="1.0" height="1.1" fill="#888"/>
<rect x="845.7" y="375.2" width="1.4" height="1.1" fill="#888"/>
<rect x="847.4" y="375.2" width="1.0" height="1.1" fill="#888"/>
<rect x="848.8" y="375.2" width="1.5" height="1.1" fill="#888"/>
<rect x="850.7" y="375.2" width="0.9" height="1.1" fill="#888"/>
<rect x="851.9" y="375.2" width="1.2" height="1.1" fill="#888"/>
<rect x="853.4" y="375.2" width="1.0" height="1.1" fill="#888"/>
<rect x="856.6" y="375.2" width="1.1" height="1.1" fill="#888"/>
<rect x="861.4" y="375.2" width="1.3" height="1.1" fill="#888"/>
<rect x="862.9" y="375.2" width="1.4" height="1.1" fill="#888"/>
<rect x="864.7" y="375.2" width="1.2" height="1.1" fill="#888"/>
<rect x="866.2" y="375.2" width="1.2" height="1.1" fill="#888"/>
<rect x="867.8" y="375.2" width="1.3" height="1.1" fill="#888"/>
<rect x="871.4" y="375.2" width="1.4" height="1.1" fill="#888"/>
<rect x="873.0" y="375.2" width="1.1" height="1.1" fill="#888"/>
<rect x="875.9" y="375.2" width="1.5" height="1.1" fill="#888"/>
<rect x="843.3" y="377.2" width="0.9" height="1.0" fill="#aaa"/>
<rect x="844.4" y="377.2" width="1.0" height="1.0" fill="#aaa"/>
<rect x="845.8" y="377.2" width="1.4" height="1.0" fill="#aaa"/>
<rect x="847.5" y="377.2" width="1.3" height="1.0" fill="#aaa"/>
<rect x="849.2" y="377.2" width="1.4" height="1.0" fill="#aaa"/>
<rect x="852.8" y="377.2" width="1.1" height="1.0" fill="#aaa"/>
<rect x="854.3" y="377.2" width="1.0" height="1.0" fill="#aaa"/>
<rect x="855.6" y="377.2" width="1.4" height="1.0" fill="#aaa"/>
<rect x="857.4" y="377.2" width="1.0" height="1.0" fill="#aaa"/>
<rect x="858.6" y="377.2" width="1.1" height="1.0" fill="#aaa"/>
<rect x="859.9" y="377.2" width="0.9" height="1.0" fill="#aaa"/>
<rect x="861.2" y="377.2" width="0.8" height="1.0" fill="#aaa"/>
<rect x="863.8" y="377.2" width="1.1" height="1.0" fill="#aaa"/>
<rect x="836.0" y="380.2" width="1.6" height="1.1" fill="#777"/>
<rect x="837.8" y="380.2" width="1.2" height="1.1" fill="#777"/>
<rect x="839.4" y="380.2" width="1.1" height="1.1" fill="#777"/>
<rect x="840.7" y="380.2" width="1.4" height="1.1" fill="#777"/>
<rect x="844.1" y="380.2" width="1.0" height="1.1" fill="#777"/>
<rect x="845.7" y="380.2" width="1.3" height="1.1" fill="#777"/>
<rect x="849.0" y="380.2" width="0.8" height="1.1" fill="#777"/>
<rect x="850.0" y="380.2" width="0.9" height="1.1" fill="#777"/>
<rect x="852.8" y="380.2" width="1.6" height="1.1" fill="#777"/>
<rect x="856.6" y="380.2" width="1.0" height="1.1" fill="#777"/>
<rect x="858.2" y="380.2" width="0.9" height="1.1" fill="#777"/>
<rect x="859.7" y="380.2" width="0.9" height="1.1" fill="#777"/>
<rect x="862.5" y="380.2" width="1.4" height="1.1" fill="#777"/>
<rect x="866.0" y="380.2" width="1.1" height="1.1" fill="#777"/>
<rect x="867.7" y="380.2" width="1.2" height="1.1" fill="#777"/>
<rect x="869.1" y="380.2" width="1.4" height="1.1" fill="#777"/>
<rect x="871.0" y="380.2" width="1.1" height="1.1" fill="#777"/>
<rect x="872.3" y="380.2" width="1.4" height="1.1" fill="#777"/>
<rect x="874.1" y="380.2" width="1.4" height="1.1" fill="#777"/>
<rect x="837.9" y="382.2" width="1.5" height="1.1" fill="#777"/>
<rect x="839.7" y="382.2" width="1.1" height="1.1" fill="#777"/>
<rect x="841.2" y="382.2" width="1.6" height="1.1" fill="#777"/>
<rect x="843.2" y="382.2" width="0.9" height="1.1" fill="#777"/>
<rect x="844.5" y="382.2" width="1.0" height="1.1" fill="#777"/>
<rect x="845.8" y="382.2" width="1.3" height="1.1" fill="#777"/>
<rect x="848.6" y="382.2" width="1.2" height="1.1" fill="#777"/>
<rect x="850.3" y="382.2" width="1.3" height="1.1" fill="#777"/>
<rect x="852.0" y="382.2" width="1.0" height="1.1" fill="#777"/>
<rect x="853.2" y="382.2" width="1.5" height="1.1" fill="#777"/>
<rect x="854.9" y="382.2" width="1.6" height="1.1" fill="#777"/>
<rect x="857.0" y="382.2" width="0.9" height="1.1" fill="#777"/>
<rect x="858.2" y="382.2" width="1.5" height="1.1" fill="#777"/>
<rect x="861.8" y="382.2" width="1.3" height="1.1" fill="#777"/>
<rect x="863.4" y="382.2" width="1.5" height="1.1" fill="#777"/>
<rect x="865.4" y="382.2" width="1.0" height="1.1" fill="#777"/>
<rect x="866.7" y="382.2" width="1.4" height="1.1" fill="#777"/>
<rect x="868.4" y="382.2" width="1.2" height="1.1" fill="#777"/>
<rect x="870.0" y="382.2" width="1.4" height="1.1" fill="#777"/>
<rect x="871.9" y="382.2" width="1.3" height="1.1" fill="#777"/>
<rect x="873.5" y="382.2" width="1.6" height="1.1" fill="#777"/>
<rect x="875.5" y="382.2" width="0.9" height="1.1" fill="#777"/>
<rect x="836.0" y="384.2" width="1.5" height="1.0" fill="#999"/>
<rect x="838.1" y="384.2" width="1.6" height="1.0" fill="#999"/>
<rect x="840.3" y="384.2" width="1.2" height="1.0" fill="#999"/>
<rect x="844.0" y="384.2" width="1.4" height="1.0" fill="#999"/>
<rect x="846.0" y="384.2" width="1.5" height="1.0" fill="#999"/>
<rect x="848.1" y="384.2" width="0.9" height="1.0" fill="#999"/>
<rect x="849.5" y="384.2" width="1.0" height="1.0" fill="#999"/>
<rect x="851.0" y="384.2" width="0.8" height="1.0" fill="#999"/>
<rect x="852.2" y="384.2" width="1.1" height="1.0" fill="#999"/>
<rect x="853.8" y="384.2" width="1.4" height="1.0" fill="#999"/>
<rect x="855.5" y="384.2" width="1.0" height="1.0" fill="#999"/>
<rect x="836.0" y="386.8" width="0.9" height="1.0" fill="#999"/>
<rect x="839.5" y="386.8" width="1.1" height="1.0" fill="#999"/>
<rect x="841.0" y="386.8" width="1.2" height="1.0" fill="#999"/>
<rect x="845.6" y="386.8" width="1.0" height="1.0" fill="#999"/>
<rect x="847.2" y="386.8" width="0.8" height="1.0" fill="#999"/>
<rect x="848.4" y="386.8" width="1.2" height="1.0" fill="#999"/>
<rect x="849.9" y="386.8" width="1.0" height="1.0" fill="#999"/>
<rect x="851.2" y="386.8" width="1.6" height="1.0" fill="#999"/>
<rect x="853.4" y="386.8" width="0.8" height="1.0" fill="#999"/>
<rect x="854.4" y="386.8" width="1.1" height="1.0" fill="#999"/>
<rect x="855.8" y="386.8" width="1.2" height="1.0" fill="#999"/>
<rect x="836.0" y="389.3" width="1.0" height="1.0" fill="#999"/>
<rect x="837.4" y="389.3" width="1.3" height="1.0" fill="#999"/>
<rect x="839.2" y="389.3" width="1.4" height="1.0" fill="#999"/>
<rect x="840.9" y="389.3" width="1.4" height="1.0" fill="#999"/>
<rect x="842.8" y="389.3" width="1.5" height="1.0" fill="#999"/>
<rect x="844.5" y="389.3" width="0.9" height="1.0" fill="#999"/>
<rect x="849.7" y="389.3" width="1.3" height="1.0" fill="#999"/>
<rect x="851.4" y="389.3" width="0.9" height="1.0" fill="#999"/>
<rect x="852.8" y="389.3" width="1.6" height="1.0" fill="#999"/>
<rect x="854.7" y="389.3" width="1.1" height="1.0" fill="#999"/>
<rect x="857.8" y="389.3" width="1.1" height="1.0" fill="#999"/>
<path d="M871.5,392.5 L874,388.5 L876,392.5 Z" fill="#d9363e"/>
<rect x="873.0" y="391.3" width="4.0" height="1.0" fill="#555"/>
</svg>
<div class="a" style="left:810px;top:431px;font-size:10px;letter-spacing:0.25px;line-height:14px;color:#2e8fd6">学籍/学历在线验证报告</div>
</body></html>
